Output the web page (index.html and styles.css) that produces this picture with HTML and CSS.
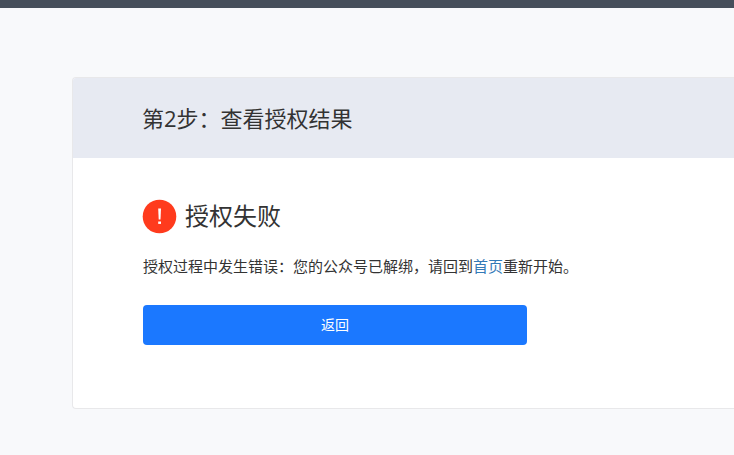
FILE: index.html
```html
<!DOCTYPE html>
<html lang="zh-CN">
<head>
<meta charset="utf-8">
<meta name="viewport" content="width=device-width, initial-scale=1">
<title>查看授权结果</title>
<link rel="stylesheet" href="styles.css">
</head>
<body>
<header class="topbar"></header>
<main class="page">
  <section class="card">
    <h1 class="card-title">第2步：查看授权结果</h1>
    <div class="card-body">
      <h2 class="result">
        <svg class="result-icon" viewBox="0 0 34 34" aria-hidden="true">
          <circle cx="16.5" cy="17.5" r="16.8" fill="#ff3b1d"/>
          <path d="M15.2 9.5h2.8l-.5 11h-1.8z" fill="#fff"/>
          <rect x="15.2" y="22.5" width="2.8" height="2.4" fill="#fff"/>
        </svg>
        授权失败
      </h2>
      <p class="message">授权过程中发生错误：您的公众号已解绑，请回到<a class="link" href="#">首页</a>重新开始。</p>
      <button class="button" type="button">返回</button>
    </div>
  </section>
</main>
</body>
</html>
```
FILE: styles.css
```css
* {
  box-sizing: border-box;
}

body {
  margin: 0;
  background: #f8f9fb;
  color: #333;
  font-family: "Open Sans", "Noto Sans CJK SC", sans-serif;
  font-weight: 400;
}

.topbar {
  height: 8px;
  background: #464f5b;
}

.page {
  padding: 69px 0 46px 72px;
}

.card {
  background: #fff;
  border: 1px solid #e8e8ea;
  border-right: 0;
  border-radius: 4px 0 0 4px;
  overflow: hidden;
}

.card-title {
  margin: 0;
  padding: 0 69px;
  background: #e7eaf2;
  font-size: 22px;
  font-weight: 400;
  line-height: 80px;
}

.card-body {
  padding: 40px 70px 63px;
}

.result {
  display: flex;
  align-items: center;
  gap: 8px;
  margin: 0 0 20px;
  font-size: 24px;
  font-weight: 400;
  line-height: 36px;
}

.result-icon {
  width: 34px;
  height: 34px;
  overflow: visible;
}

.message {
  margin: 0 0 26px;
  font-size: 15px;
  line-height: 25px;
}

.link {
  color: #337ab7;
  text-decoration: none;
}

.button {
  display: block;
  width: 100%;
  max-width: 384px;
  height: 40px;
  padding: 0;
  border: 0;
  border-radius: 4px;
  background: #1b78ff;
  color: #fff;
  font: inherit;
  font-size: 14px;
  line-height: 40px;
}
```
